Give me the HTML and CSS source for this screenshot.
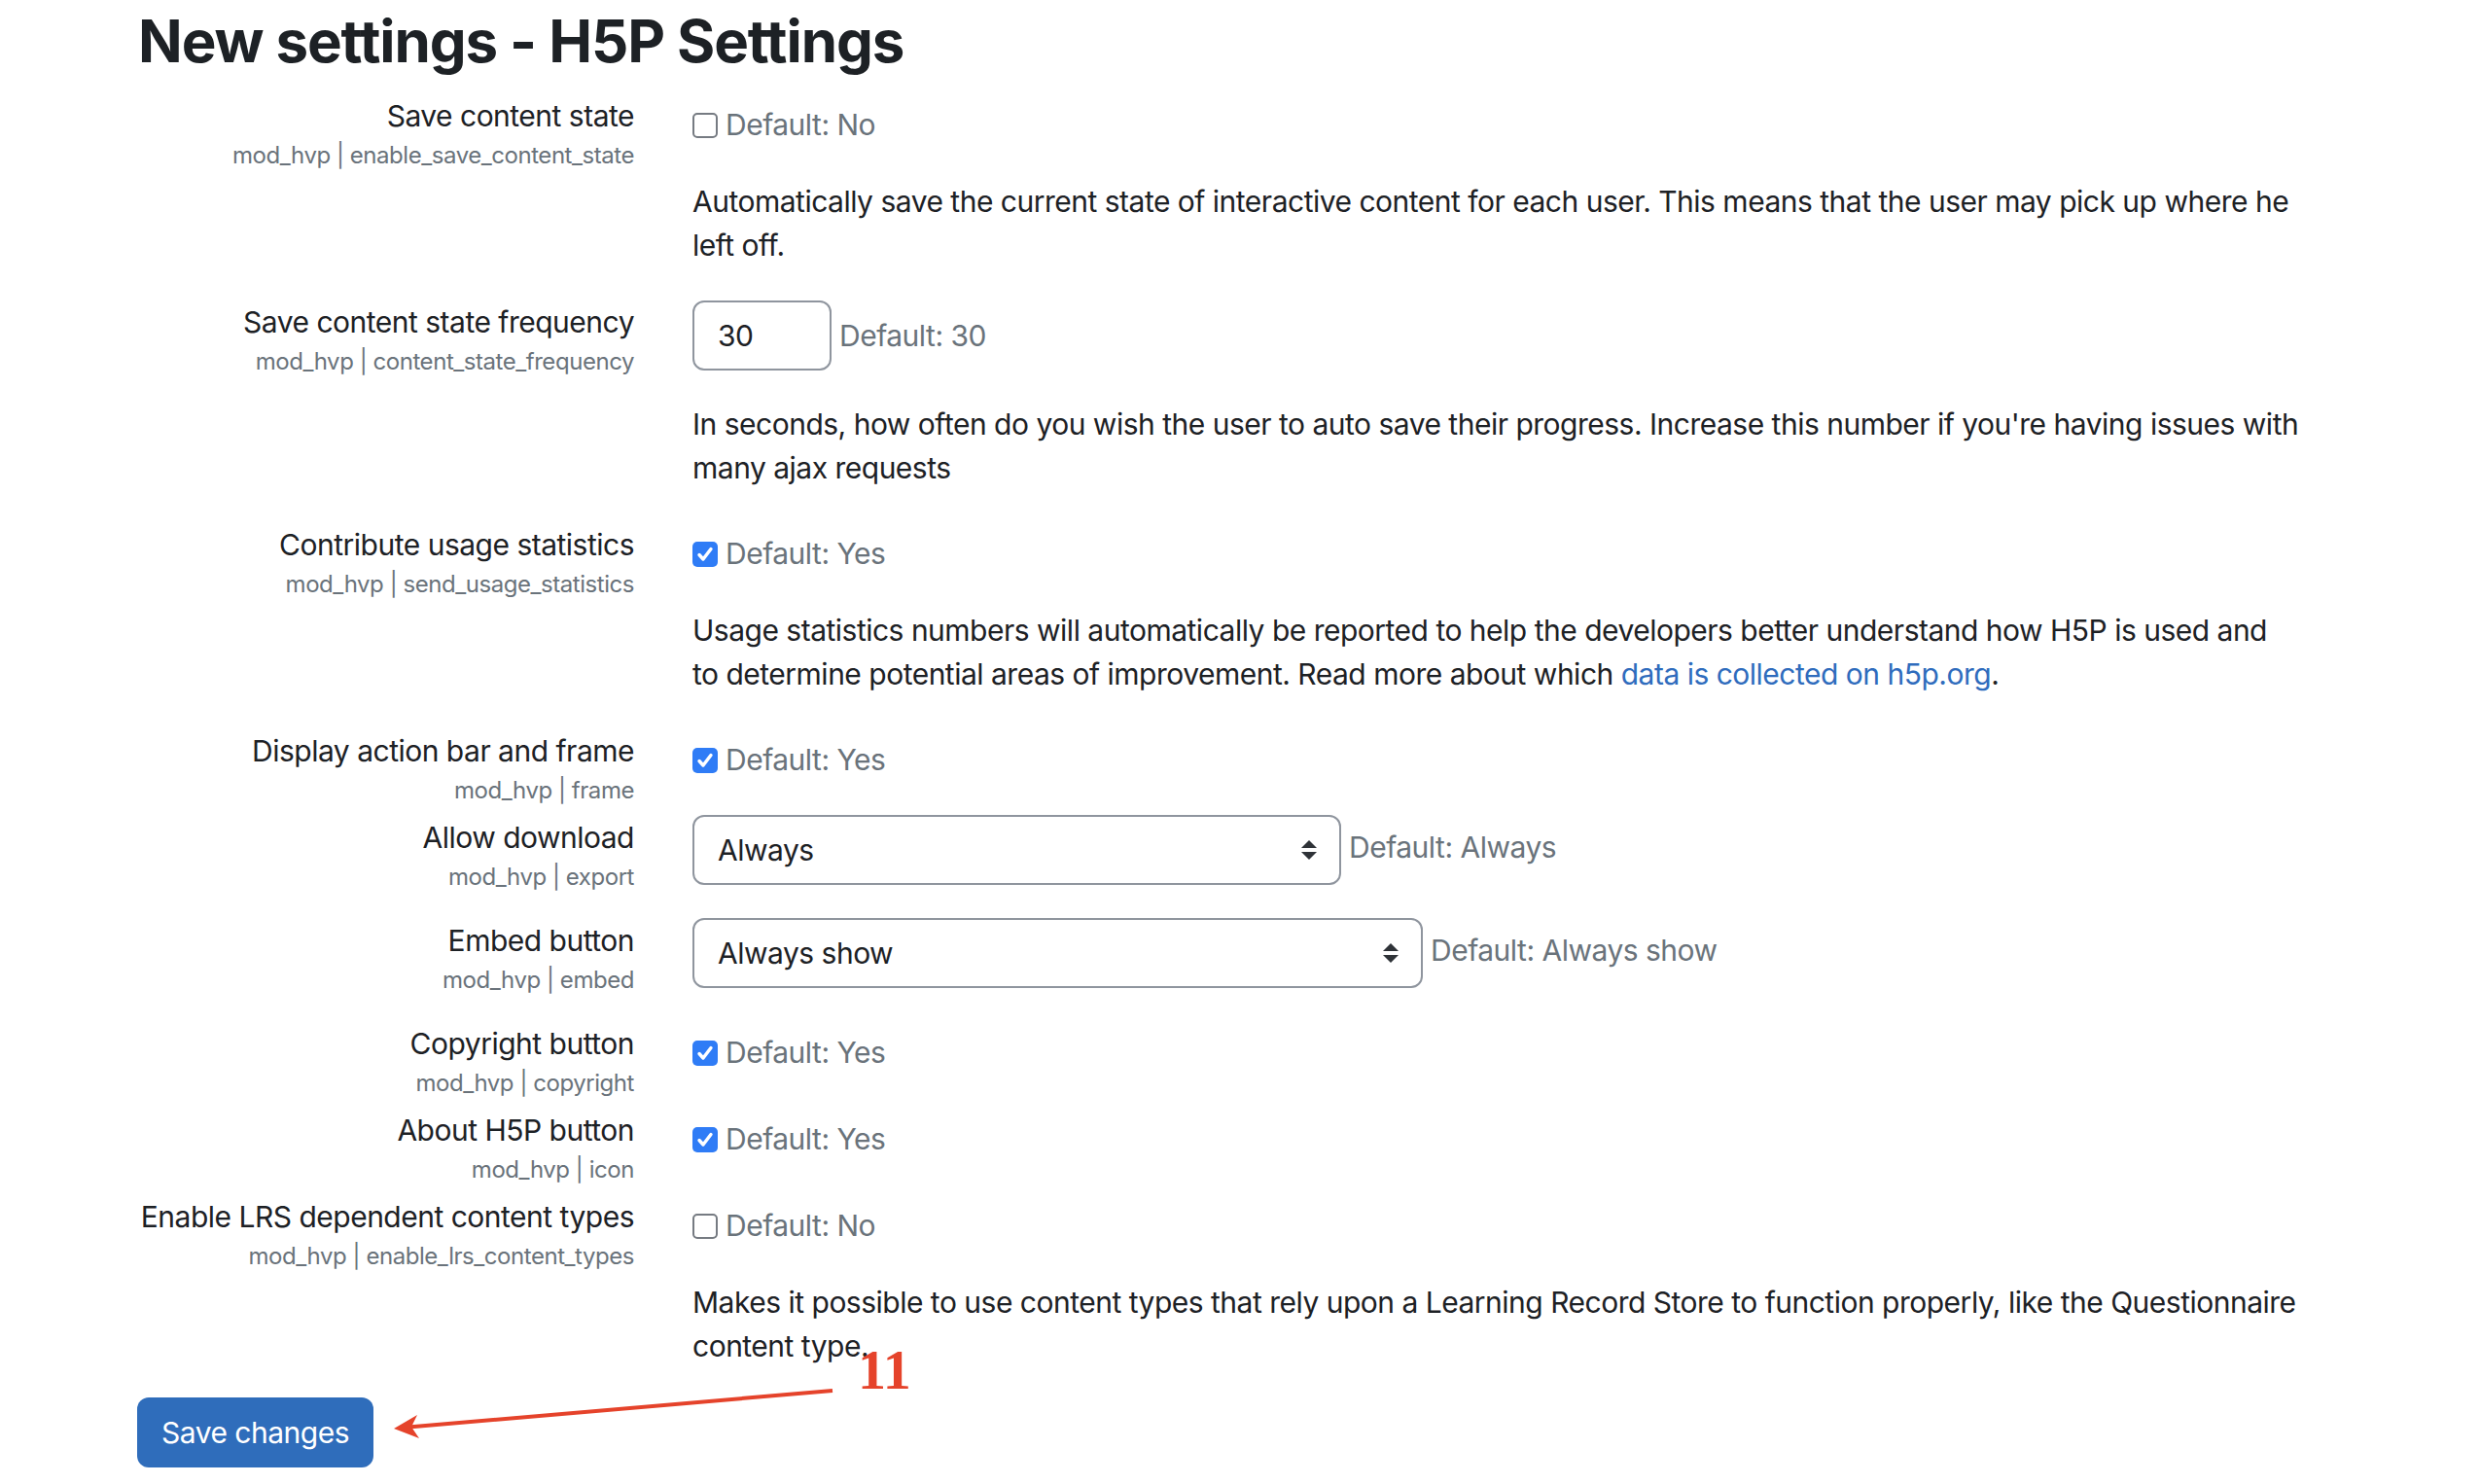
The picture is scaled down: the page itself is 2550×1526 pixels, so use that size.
FILE: index.html
```html
<!DOCTYPE html>
<html lang="en">
<head>
<meta charset="utf-8">
<title>New settings - H5P Settings</title>
<link rel="stylesheet" href="styles.css">
</head>
<body>
<main class="page">
  <h2 class="title">New settings - H5P Settings</h2>

  <div class="setting">
    <div class="label-col">
      <div class="label">Save content state</div>
      <div class="shortname">mod_hvp | enable_save_content_state</div>
    </div>
    <div class="setting-col checkrow">
      <div class="control"><span class="cb"></span><span class="default">Default: No</span></div>
      <p class="desc">Automatically save the current state of interactive content for each user. This means that the user may pick up where he<br>left off.</p>
    </div>
  </div>

  <div class="setting">
    <div class="label-col">
      <div class="label">Save content state frequency</div>
      <div class="shortname">mod_hvp | content_state_frequency</div>
    </div>
    <div class="setting-col">
      <div class="control"><span class="textbox">30</span><span class="default">Default: 30</span></div>
      <p class="desc desc-input">In seconds, how often do you wish the user to auto save their progress. Increase this number if you're having issues with<br>many ajax requests</p>
    </div>
  </div>

  <div class="setting">
    <div class="label-col">
      <div class="label">Contribute usage statistics</div>
      <div class="shortname">mod_hvp | send_usage_statistics</div>
    </div>
    <div class="setting-col checkrow">
      <div class="control"><span class="cb checked"><svg viewBox="0 0 26 26" class="tick"><path d="M7 13.5l4 4.5 8-10.5"/></svg></span><span class="default">Default: Yes</span></div>
      <p class="desc">Usage statistics numbers will automatically be reported to help the developers better understand how H5P is used and<br>to determine potential areas of improvement. Read more about which <a href="#" class="link">data is collected on h5p.org</a>.</p>
    </div>
  </div>

  <div class="setting">
    <div class="label-col">
      <div class="label">Display action bar and frame</div>
      <div class="shortname">mod_hvp | frame</div>
    </div>
    <div class="setting-col checkrow">
      <div class="control"><span class="cb checked"><svg viewBox="0 0 26 26" class="tick"><path d="M7 13.5l4 4.5 8-10.5"/></svg></span><span class="default">Default: Yes</span></div>
    </div>
  </div>

  <div class="setting">
    <div class="label-col">
      <div class="label">Allow download</div>
      <div class="shortname">mod_hvp | export</div>
    </div>
    <div class="setting-col selectrow">
      <div class="control">
        <span class="select sel-download"><span class="sel-text">Always</span><svg class="sel-arrow" viewBox="0 0 18 20"><path d="M9 0l8 8H1z"/><path d="M9 20l8-8H1z"/></svg></span><span class="default sel-default">Default: Always</span>
      </div>
    </div>
  </div>

  <div class="setting">
    <div class="label-col">
      <div class="label">Embed button</div>
      <div class="shortname">mod_hvp | embed</div>
    </div>
    <div class="setting-col selectrow">
      <div class="control">
        <span class="select sel-embed"><span class="sel-text">Always show</span><svg class="sel-arrow" viewBox="0 0 18 20"><path d="M9 0l8 8H1z"/><path d="M9 20l8-8H1z"/></svg></span><span class="default sel-default">Default: Always show</span>
      </div>
    </div>
  </div>

  <div class="setting">
    <div class="label-col">
      <div class="label">Copyright button</div>
      <div class="shortname">mod_hvp | copyright</div>
    </div>
    <div class="setting-col checkrow">
      <div class="control"><span class="cb checked"><svg viewBox="0 0 26 26" class="tick"><path d="M7 13.5l4 4.5 8-10.5"/></svg></span><span class="default">Default: Yes</span></div>
    </div>
  </div>

  <div class="setting">
    <div class="label-col">
      <div class="label">About H5P button</div>
      <div class="shortname">mod_hvp | icon</div>
    </div>
    <div class="setting-col checkrow">
      <div class="control"><span class="cb checked"><svg viewBox="0 0 26 26" class="tick"><path d="M7 13.5l4 4.5 8-10.5"/></svg></span><span class="default">Default: Yes</span></div>
    </div>
  </div>

  <div class="setting last">
    <div class="label-col">
      <div class="label">Enable LRS dependent content types</div>
      <div class="shortname">mod_hvp | enable_lrs_content_types</div>
    </div>
    <div class="setting-col checkrow">
      <div class="control"><span class="cb"></span><span class="default">Default: No</span></div>
      <p class="desc">Makes it possible to use content types that rely upon a Learning Record Store to function properly, like the Questionnaire<br>content type.</p>
    </div>
  </div>

  <button class="save" type="button">Save changes</button>

  <svg class="annot-arrow" viewBox="0 0 2550 1526" width="2550" height="1526">
    <line x1="856" y1="1424" x2="420" y2="1461.5" />
    <polygon points="405,1463 429,1449 423,1461.3 431,1473" />
  </svg>
  <div class="annot-num">11</div>
</main>
</body>
</html>
```
FILE: styles.css
```css
html, body {
  margin: 0;
  padding: 0;
  background: #ffffff;
}

body {
  font-family: Inter, "Noto Sans", "Liberation Sans", sans-serif;
  color: #1d2125;
  font-size: 30px;
  line-height: 45px;
  letter-spacing: -0.5px;
}

.page {
  position: relative;
  width: 2550px;
  min-height: 1526px;
  padding: 0 0 0 142px;
  box-sizing: border-box;
}

.title {
  margin: 6px 0 19px 0;
  font-size: 60px;
  line-height: 72px;
  font-weight: 700;
  letter-spacing: -1.1px;
  color: #1d2125;
}

.setting {
  display: grid;
  grid-template-columns: 540px 1720px;
  column-gap: 60px;
  margin: 0 0 8px -30px;
}

.setting.last {
  margin-bottom: 4px;
}

.label-col {
  text-align: right;
}

.label {
  font-size: 30px;
  line-height: 45px;
  color: #1d2125;
  white-space: nowrap;
}

.shortname {
  font-size: 24px;
  line-height: 36px;
  color: #6a737b;
  letter-spacing: -0.45px;
  white-space: nowrap;
}

.checkrow {
  padding-top: 9px;
}

.control {
  display: flex;
  align-items: center;
  min-height: 45px;
}

.default {
  color: #6a737b;
  font-size: 30px;
  line-height: 45px;
  margin-left: 8px;
}

.sel-default {
  margin-bottom: 6px;
}

.cb {
  width: 26px;
  height: 26px;
  box-sizing: border-box;
  border: 2px solid #767b82;
  border-radius: 5px;
  background: #ffffff;
  display: inline-flex;
  flex: none;
}

.cb.checked {
  border: none;
  background: #2f7cf6;
}

.tick {
  width: 26px;
  height: 26px;
  fill: none;
  stroke: #ffffff;
  stroke-width: 3.4;
  stroke-linecap: round;
  stroke-linejoin: round;
}

.textbox {
  width: 143px;
  height: 72px;
  box-sizing: border-box;
  border: 2px solid #8f959e;
  border-radius: 12px;
  padding: 0 24px;
  display: inline-flex;
  align-items: center;
  color: #1d2125;
}

.desc {
  margin: 34px 0 26px 0;
  font-size: 30px;
  line-height: 45px;
}

.desc-input {
  margin-top: 33px;
}

.link {
  color: #2f6cbd;
  text-decoration: none;
}

.selectrow {
  min-height: 99px;
  margin-top: -1px;
}

.select {
  height: 72px;
  box-sizing: border-box;
  border: 2px solid #8f959e;
  border-radius: 12px;
  padding: 0 24px;
  display: inline-flex;
  align-items: center;
  justify-content: space-between;
  color: #1d2125;
}

.sel-download {
  width: 667px;
}

.sel-embed {
  width: 751px;
}

.sel-arrow {
  width: 18px;
  height: 20px;
  fill: #2f3338;
  margin-right: -2px;
}

.save {
  display: block;
  height: 72px;
  margin: 0 0 0 -1px;
  padding: 0 25px;
  border: none;
  border-radius: 12px;
  background: #2f6dbb;
  color: #ffffff;
  font-family: Inter, "Noto Sans", "Liberation Sans", sans-serif;
  font-size: 30px;
  line-height: 45px;
  letter-spacing: -0.5px;
}

.annot-arrow {
  position: absolute;
  left: 0;
  top: 0;
  pointer-events: none;
}

.annot-arrow line {
  stroke: #e5432b;
  stroke-width: 4;
}

.annot-arrow polygon {
  fill: #e5432b;
}

.annot-num {
  position: absolute;
  left: 882px;
  top: 1374px;
  font-family: "Liberation Serif", "Times New Roman", serif;
  font-weight: 700;
  font-size: 58px;
  line-height: 58px;
  letter-spacing: 0;
  color: #e5432b;
}
```
